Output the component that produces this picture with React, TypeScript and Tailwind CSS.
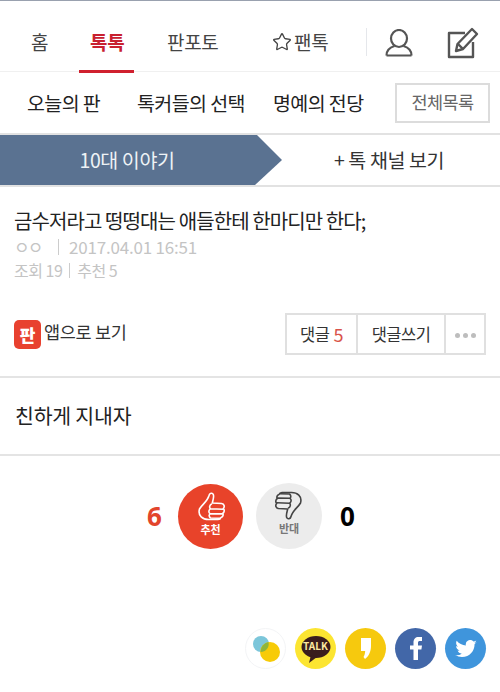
import { Star } from "lucide-react";

const FONT = { fontFamily: '"Noto Sans CJK KR", "Noto Sans", sans-serif' };

function UserIcon() {
  return (
    <svg width="28" height="28" viewBox="0 0 28 28" fill="none" stroke="#555" strokeWidth="2.200">
      <ellipse cx="14" cy="9.500" rx="8" ry="8.500" />
      <path d="M1.500 26.500c0-5 3-8 8-9.500M26.500 26.500c0-5-3-8-8-9.500M1.500 26.500h25" strokeLinejoin="round" />
    </svg>
  );
}

function WriteIcon() {
  return (
    <svg width="32" height="32" viewBox="0 0 32 32" fill="none" stroke="#555" strokeWidth="2.400" strokeLinejoin="round">
      <path d="M18 6H2v24h24V15" />
      <path d="M9 24l1.500-7L25 2l5 5L16 22z" />
      <path d="M11 17l5 5" />
    </svg>
  );
}

function Thumb({ color, down }: { color: string; down?: boolean }) {
  return (
    <svg
      width="28"
      height="29"
      viewBox="0 0 28 29"
      fill="none"
      stroke={color}
      strokeWidth="1.600"
      strokeLinejoin="round"
      strokeLinecap="round"
      className={down ? "rotate-180" : ""}
    >
      <path d="M2.500 17C5 12.500 10.500 9.500 12 3.500 12.500 1 15.500.5 16.300 2.500c1 2.500-.5 6-1 8.500l9.200.5c3 .3 3.300 3.500 1.800 5 1.500 1.500 1 4-.5 4.800.8 1.700 0 3.700-1.800 4.200-.5 1.500-1.500 2-3 2H11.500C6 27.500.5 24 2.500 17z" />
      <path d="M14.500 12c-2 1-2.500 3.500-1 4.800M13.500 16.800l12.500.4M13 17c-1.500 1.500-1.500 3.500 0 4.700l12.500.2M13 21.700c-1.300 1.300-1 3.300.5 4.300l9.500.3" />
    </svg>
  );
}

function ShareIcons() {
  return (
    <div className="flex items-center justify-end gap-[9px] pr-[14px]">
      {/* band */}
      <div className="flex h-[41px] w-[41px] items-center justify-center rounded-full border border-gray-100 bg-white">
        <svg width="30" height="28" viewBox="0 0 30 28">
          <circle cx="10" cy="9" r="8" fill="#7cc6da" />
          <circle cx="19" cy="17" r="10" fill="#f7cb07" />
          <path d="M9.500 17a8 8 0 0 0 8-9.900a10 10 0 0 0-8 9.900z" fill="#8fb53c" />
        </svg>
      </div>
      {/* kakao talk */}
      <div className="flex h-[41px] w-[41px] items-center justify-center rounded-full bg-[#fce531]">
        <svg width="30" height="30" viewBox="0 0 30 30">
          <ellipse cx="15" cy="13" rx="14.500" ry="11" fill="#3a1d1d" />
          <path d="M10 21l-2 8 8-6z" fill="#3a1d1d" />
        </svg>
        <span className="absolute mt-[-5px] text-[10px] leading-none font-bold text-[#fce9a0]" style={FONT}>TALK</span>
      </div>
      {/* kakao story */}
      <div className="flex h-[41px] w-[41px] items-center justify-center rounded-full bg-[#f6c90e]">
        <svg width="12" height="21" viewBox="0 0 12 21">
          <path d="M1 0h10v8c0 5-2 10-6 13l-1.500-2c1-1.500 1.500-3.500 1.700-6H1z" fill="#fff" />
        </svg>
      </div>
      {/* facebook */}
      <div className="flex h-[41px] w-[41px] items-center justify-center rounded-full bg-[#4267a8]">
        <svg width="12" height="23" viewBox="0 0 12 23">
          <path d="M3.500 23V12.500H0V8.500h3.500V5.500C3.500 2 5.500 0 8.500 0H12v4h-2C8.500 4 8 4.500 8 6v2.500h4l-.6 4H8V23z" fill="#fff" />
        </svg>
      </div>
      {/* twitter */}
      <div className="flex h-[41px] w-[41px] items-center justify-center rounded-full bg-[#3f95dc]">
        <svg width="22" height="18" viewBox="0 0 24 20">
          <path d="M24 2.400c-.9.400-1.800.700-2.800.800 1-.6 1.800-1.600 2.200-2.700-1 .6-2 1-3.100 1.200A4.900 4.900 0 0 0 11.900 6.200C7.800 6 4.200 4 1.700.9c-1.300 2.200-.6 5.100 1.500 6.500-.8 0-1.500-.2-2.200-.6 0 2.300 1.600 4.400 3.900 4.900-.7.200-1.500.2-2.200.1.600 2 2.400 3.400 4.600 3.400A9.900 9.900 0 0 1 0 16.800 14 14 0 0 0 7.500 19c9.100 0 14.300-7.700 14-14.600 1-.7 1.800-1.500 2.500-2z" fill="#fff" />
        </svg>
      </div>
    </div>
  );
}

export default function App() {
  return (
    <div className="h-[692px] w-[500px] overflow-hidden bg-white" style={FONT}>
      <div className="h-px bg-gray-400" />

      {/* 상단 메뉴 */}
      <div className="mt-[11px] flex h-[60px] items-center border-b border-[#f0f0f0] pl-[31px] text-[19px] tracking-[-0.3px] text-[#444]">
        <span className="w-[48px] pt-[1px]">홈</span>
        <div className="relative flex h-full w-[88px] items-center pt-[1px]">
          <span className="pl-[11px] font-bold text-[#c8202f]">톡톡</span>
          <div className="absolute bottom-[-2px] left-0 h-[3px] w-[55px] bg-[#d0202e]" />
        </div>
        <span className="w-[105px] pt-[1px]">판포토</span>
        <span className="flex w-[94px] items-center gap-[2px] pt-[1px]">
          <Star size={20} strokeWidth={1.600} />
          팬톡
        </span>
        <div className="h-[28px] w-px bg-gray-200" />
        <div className="ml-[18px] flex items-center gap-[34px] pt-[2px]">
          <UserIcon />
          <WriteIcon />
        </div>
      </div>

      {/* 서브 메뉴 */}
      <div className="flex h-[61px] items-center pl-[27px] text-[19.500px] tracking-[-0.6px] text-[#222]">
        <span className="w-[110px]">오늘의 판</span>
        <span className="w-[136px]">톡커들의 선택</span>
        <span className="w-[122px]">명예의 전당</span>
        <div className="flex h-[40px] w-[95px] items-center justify-center border-2 border-[#dcdcdc] text-[17.500px] text-[#666]">
          전체목록
        </div>
      </div>

      {/* 채널 */}
      <div className="flex h-[54px] items-stretch border-y-2 border-[#e2e2e2] text-[19.500px] tracking-[-0.4px]">
        <div className="flex w-[282px] items-center justify-center bg-[#5a7291] pr-[28px] text-[#eef2f6] [clip-path:polygon(0_0,257px_0,100%_50%,255px_100%,0_100%)]">
          10대 이야기
        </div>
        <div className="flex flex-1 items-center justify-center pr-[4px] text-[#333]">+ 톡 채널 보기</div>
      </div>

      {/* 글 제목 */}
      <div className="px-[14px] pt-[19px]">
        <h1 className="text-[20px] leading-[30px] tracking-[-0.9px] text-[#222]">
          금수저라고 떵떵대는 애들한테 한마디만 한다;
        </h1>
        <div className="flex items-center text-[17px] leading-[22px] tracking-[-0.2px] text-[#c4c4c4]">
          <span className="w-[44px] tracking-[-2px]">ㅇㅇ</span>
          <span className="mr-[10px] h-[16px] w-px bg-[#ccc]" />
          2017.04.01 16:51
        </div>
        <div className="mt-[1px] flex items-center text-[16px] leading-[22px] tracking-[-0.5px] text-[#c4c4c4]">
          조회 19
          <span className="mx-[7px] h-[15px] w-px bg-[#ccc]" />
          추천 5
        </div>
      </div>

      {/* 앱으로 보기 / 댓글 */}
      <div className="mt-[32px] flex items-center justify-between px-[14px]">
        <div className="flex items-center gap-[3px] text-[17.500px] tracking-[-0.3px] text-[#333]">
          <div className="flex h-[29px] w-[27px] items-center justify-center rounded-[5px] bg-[#e8412f] text-[17px] leading-none font-black text-white">
            판
          </div>
          <span className="mt-[-3px]">앱으로 보기</span>
        </div>
        <div className="flex h-[42px] w-[201px] border-2 border-[#e0e0e0] text-[16.500px] tracking-[-0.5px] text-[#333]">
          <div className="flex w-[71px] items-center justify-center gap-1 border-r-2 border-[#e0e0e0]">
            댓글 <span className="text-[18px] text-[#d9534a]">5</span>
          </div>
          <div className="flex w-[88px] items-center justify-center border-r-2 border-[#e0e0e0]">댓글쓰기</div>
          <div className="flex flex-1 items-center justify-center gap-[3px] pt-[3px]">
            <span className="h-[5px] w-[5px] rounded-full bg-[#bdbdbd]" />
            <span className="h-[5px] w-[5px] rounded-full bg-[#bdbdbd]" />
            <span className="h-[5px] w-[5px] rounded-full bg-[#bdbdbd]" />
          </div>
        </div>
      </div>

      {/* 본문 */}
      <div className="mt-[21px] flex h-[80px] items-center border-y-2 border-[#e4e4e4] px-[15px] pb-[2px] text-[20.500px] tracking-[-0.2px] text-[#222]">
        친하게 지내자
      </div>

      {/* 추천 / 반대 */}
      <div className="mt-[27px] flex items-center pl-[147px]">
        <span className="w-[31px] text-[26px] font-bold text-[#e2452c]" style={{ fontFamily: '"Open Sans", sans-serif' }}>
          6
        </span>
        <div className="flex h-[65px] w-[65px] flex-col items-center rounded-full bg-[#e8432a] pt-[8px]">
          <Thumb color="#fff" />
          <span className="mt-[2px] text-[11px] leading-[12px] font-bold text-white">추천</span>
        </div>
        <div className="ml-[13px] flex h-[66px] w-[66px] flex-col items-center rounded-full bg-[#ececec] pt-[8px]">
          <Thumb color="#444" down />
          <span className="mt-[2px] text-[11px] leading-[12px] font-bold text-[#777]">반대</span>
        </div>
        <span className="ml-[18px] text-[26px] font-bold text-black" style={{ fontFamily: '"Open Sans", sans-serif' }}>
          0
        </span>
      </div>

      <div className="mt-[79px]">
        <ShareIcons />
      </div>
    </div>
  );
}
